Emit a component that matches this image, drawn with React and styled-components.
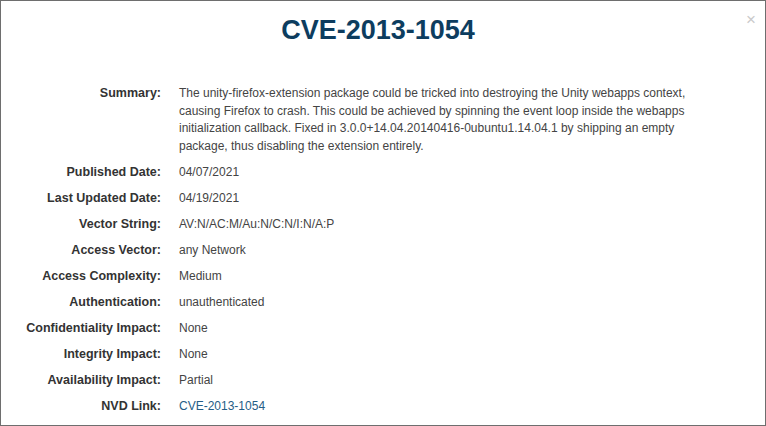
import React from 'react';
import styled, { createGlobalStyle } from 'styled-components';

const GlobalStyle = createGlobalStyle`
  html, body {
    margin: 0;
    padding: 0;
    background: #fff;
  }
  body {
    font-family: "Liberation Sans", Arial, sans-serif;
    color: #333;
  }
`;

const Modal = styled.div`
  box-sizing: border-box;
  width: 766px;
  height: 426px;
  border: 1px solid #6e6e6e;
  background: #fff;
  position: relative;
  overflow: hidden;
`;

const Header = styled.div`
  display: flex;
  justify-content: center;
  padding: 13px 10px 0 0;
  height: 84px;
  box-sizing: border-box;
`;

const Title = styled.h1`
  margin: 0;
  font-size: 27px;
  line-height: 32px;
  font-weight: 700;
  color: #0d3d5f;
`;

const Close = styled.button`
  position: absolute;
  top: 10px;
  right: 7px;
  border: 0;
  background: transparent;
  padding: 0;
  width: 14px;
  height: 18px;
  color: #cacaca;
  font-family: "Liberation Sans", Arial, sans-serif;
  font-size: 17px;
  line-height: 18px;
  cursor: pointer;
`;

const Details = styled.dl`
  display: grid;
  grid-template-columns: 160px 532px;
  column-gap: 18px;
  row-gap: 8.4px;
  margin: 0;
  padding: 0;
  font-size: 12px;
  line-height: 17.6px;
`;

const Label = styled.dt`
  margin: 0;
  text-align: right;
  font-weight: 700;
  font-size: 12.5px;
  color: #333;
`;

const Value = styled.dd`
  margin: 0;
  color: #444;
`;

const Link = styled.a`
  color: #255d86;
  text-decoration: none;
`;

const rows = [
  ['Summary:', 'The unity-firefox-extension package could be tricked into destroying the Unity webapps context, causing Firefox to crash. This could be achieved by spinning the event loop inside the webapps initialization callback. Fixed in 3.0.0+14.04.20140416-0ubuntu1.14.04.1 by shipping an empty package, thus disabling the extension entirely.'],
  ['Published Date:', '04/07/2021'],
  ['Last Updated Date:', '04/19/2021'],
  ['Vector String:', 'AV:N/AC:M/Au:N/C:N/I:N/A:P'],
  ['Access Vector:', 'any Network'],
  ['Access Complexity:', 'Medium'],
  ['Authentication:', 'unauthenticated'],
  ['Confidentiality Impact:', 'None'],
  ['Integrity Impact:', 'None'],
  ['Availability Impact:', 'Partial'],
];

export default function App() {
  return (
    <>
      <GlobalStyle />
      <Modal>
        <Header>
          <Title>CVE-2013-1054</Title>
        </Header>
        <Close aria-label="Close">×</Close>
        <Details>
          {rows.map(([label, value]) => (
            <React.Fragment key={label}>
              <Label>{label}</Label>
              <Value>{value}</Value>
            </React.Fragment>
          ))}
          <Label>NVD Link:</Label>
          <Value>
            <Link href="#">CVE-2013-1054</Link>
          </Value>
        </Details>
      </Modal>
    </>
  );
}
